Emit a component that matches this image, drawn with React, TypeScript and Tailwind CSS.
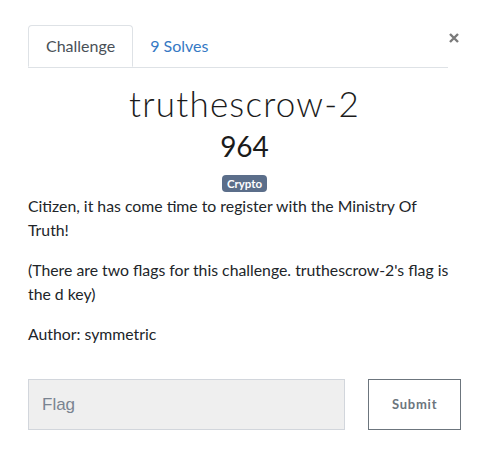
export default function App() {
  return (
    <div className="w-[489px] h-[470px] bg-white font-['Lato',sans-serif] text-[#212529]">
      <div className="px-[28px] pt-[25px]">
        <div className="flex items-start">
          <ul className="flex w-[420px] border-b border-[#dee2e6]">
            <li className="-mb-px h-[42px] flex items-center px-[17px] border border-b-white border-[#dee2e6] rounded-t-[4px] bg-white text-[16px] text-[#495057]">
              Challenge
            </li>
            <li className="h-[42px] flex items-center px-[17px] text-[16px] text-[#3579c4]">
              9 Solves
            </li>
          </ul>
          <button className="ml-[1px] mt-[8px] w-[10px] h-[10px]" aria-label="Close">
            <svg viewBox="0 0 10 10" className="w-[10px] h-[10px]">
              <path d="M1 1L9 9M9 1L1 9" stroke="#7a7a7a" strokeWidth="2.4" />
            </svg>
          </button>
        </div>

        <div className="text-center mt-[13px]">
          <h3 className="text-[35px] leading-[44px] font-light tracking-[0.035em] text-[#1b1b1b]">
            truthescrow-2
          </h3>
          <h4 className="mt-[4px] text-[28px] leading-[34px] font-normal text-[#1b1b1b]">964</h4>
          <span className="mt-[12px] inline-block rounded-[4px] bg-[#5b6e8a] px-[5px] text-[11.5px] leading-[17px] font-bold text-white align-top">
            Crypto
          </span>
        </div>

        <div className="mt-[2px] pr-[8px] text-[15.8px] leading-[24px] text-[#212529]">
          <p className="mb-[16px]">Citizen, it has come time to register with the Ministry Of Truth!</p>
          <p className="mb-[16px]">
            (There are two flags for this challenge. truthescrow-2's flag is the d key)
          </p>
          <p>Author: symmetric</p>
        </div>

        <div className="mt-[33px] flex items-start">
          <div className="w-[318px] h-[51px] flex items-center bg-[#efefef] border border-[#d2d6dc] px-[13px]">
            <span className="font-['Liberation_Sans',sans-serif] text-[17px] text-[#7a8491]">Flag</span>
          </div>
          <button className="ml-[23px] w-[93px] h-[51px] border border-[#6c757d] bg-white font-['Lato',sans-serif] text-[13px] font-bold tracking-[0.06em] text-[#6c757d]">
            Submit
          </button>
        </div>
      </div>
    </div>
  );
}
